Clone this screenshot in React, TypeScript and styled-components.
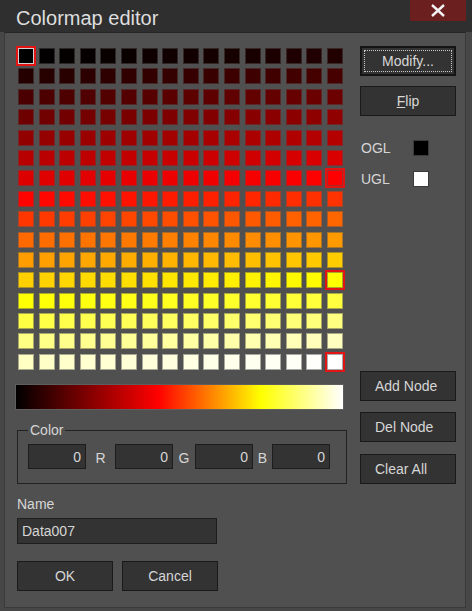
import React from "react";
import styled, { createGlobalStyle } from "styled-components";

const Global = createGlobalStyle`
  html, body { margin: 0; padding: 0; background: #474747; }
  * { box-sizing: border-box; }
`;

const BG = 0x50;

function hot(k: number): [number, number, number] {
  if (k <= 111) return [Math.round((255 * k) / 111), 0, 0];
  if (k <= 191) return [255, Math.round((255 * (k - 111)) / 80), 0];
  return [255, 255, Math.round((255 * (k - 191)) / 64)];
}

const rgb = (c: [number, number, number]) => `rgb(${c[0]},${c[1]},${c[2]})`;
const mix = (c: [number, number, number]): [number, number, number] => [
  Math.round((c[0] + BG) / 2),
  Math.round((c[1] + BG) / 2),
  Math.round((c[2] + BG) / 2),
];

const NODES = new Set([0, 111, 191, 255]);
const SELECTED = 0;

const Window = styled.div`
  width: 472px;
  height: 611px;
  background: #474747;
  display: flex;
  flex-direction: column;
  font-family: "Liberation Sans", Arial, sans-serif;
  font-size: 14px;
  color: #d6d6d6;
`;

const TitleBar = styled.div`
  height: 32px;
  flex: none;
  background: #2f2f2f;
  display: flex;
  justify-content: space-between;
  align-items: flex-start;
  padding-left: 16px;
`;

const Title = styled.div`
  padding-top: 7px;
  font-size: 20px;
  line-height: 1.15;
  color: #dedede;
`;

const CloseButton = styled.div`
  width: 56px;
  height: 21px;
  margin-right: 6px;
  background: #6b1f1f;
  display: flex;
  align-items: center;
  justify-content: center;
`;

const Body = styled.div`
  flex: 1;
  margin: 0 6px 3px 4px;
  background: #505050;
  border: 1px solid #3a3a3a;
  border-top-color: #262626;
  display: flex;
  padding: 0 0 0 10px;
`;

const LeftColumn = styled.div`
  width: 331px;
  display: flex;
  flex-direction: column;
  padding-top: 15px;
`;

const RightColumn = styled.div`
  width: 96px;
  margin-left: 14px;
  display: flex;
  flex-direction: column;
  padding-top: 13px;
`;

const Grid = styled.div`
  margin-left: 3px;
  width: 325px;
  height: 322px;
  display: grid;
  grid-template-columns: repeat(16, 16px);
  grid-template-rows: repeat(16, 16px);
  justify-content: space-between;
  align-content: space-between;
`;

const Cell = styled.div<{ $node: boolean; $selected: boolean }>`
  width: 16px;
  height: 16px;
  border: 1px solid;
  ${(p) => (p.$node ? "outline: 2px solid #e21414;" : "")}
  ${(p) => (p.$selected ? "border-color: #d0d0d0 !important;" : "")}
`;

const GradientBar = styled.div`
  margin-top: 14px;
  width: 329px;
  height: 26px;
  border: 1px solid #5e5e5e;
  background: linear-gradient(to right, #000 0%, #f00 43.5%, #ff0 74.9%, #fff 100%);
`;

const GroupBox = styled.fieldset`
  margin: 12px 0 0 2px;
  width: 330px;
  border: 1px solid #222;
  padding: 6px 0 14px 10px;
  min-width: 0;
`;

const Legend = styled.legend`
  padding: 0 2px;
  line-height: 16px;
  font-size: 14px;
  color: #d6d6d6;
`;

const FieldRow = styled.div`
  display: flex;
  align-items: center;
`;

const NumberBox = styled.div`
  width: 58px;
  height: 25px;
  background: #333;
  border: 1px solid #1d1d1d;
  display: flex;
  align-items: center;
  justify-content: flex-end;
  padding-right: 4px;
  color: #d6d6d6;
`;

const ChannelLabel = styled.div<{ $w: number }>`
  width: ${(p) => p.$w}px;
  text-align: center;
  padding-top: 3px;
`;

const NameLabel = styled.div`
  margin: 12px 0 0 2px;
  line-height: 16px;
`;

const NameInput = styled.div`
  margin: 6px 0 0 2px;
  width: 200px;
  height: 26px;
  background: #333;
  border: 1px solid #1d1d1d;
  padding-left: 4px;
  display: flex;
  align-items: center;
`;

const ButtonRow = styled.div`
  margin: 17px 0 0 2px;
  display: flex;
  gap: 9px;
`;

const Button = styled.div<{ $mt?: number; $align?: "left" | "center"; $default?: boolean }>`
  position: relative;
  width: 96px;
  height: 30px;
  margin-top: ${(p) => p.$mt ?? 0}px;
  background: #333;
  border: ${(p) => (p.$default ? "2px solid #141414" : "1px solid #1a1a1a")};
  display: flex;
  align-items: center;
  justify-content: ${(p) => (p.$align === "left" ? "flex-start" : "center")};
  padding-left: ${(p) => (p.$align === "left" ? "14px" : "0")};
  color: #d6d6d6;
`;

const FocusRing = styled.div`
  position: absolute;
  inset: 2px;
  border: 1px dotted #c8c8c8;
`;

const SwatchRow = styled.div<{ $mt: number }>`
  margin-top: ${(p) => p.$mt}px;
  height: 16px;
  display: flex;
  align-items: center;
  padding-left: 1px;
`;

const SwatchLabel = styled.div`
  width: 52px;
`;

const Swatch = styled.div<{ $color: string }>`
  width: 16px;
  height: 16px;
  background: ${(p) => p.$color};
  border: 1px solid #3a3a3a;
`;

export default function App() {
  const cells = Array.from({ length: 256 }, (_, k) => {
    const c = hot(k);
    return (
      <Cell
        key={k}
        $node={NODES.has(k)}
        $selected={k === SELECTED}
        style={{ background: rgb(c), borderColor: rgb(mix(c)) }}
      />
    );
  });

  return (
    <>
      <Global />
      <Window>
        <TitleBar>
          <Title>Colormap editor</Title>
          <CloseButton>
            <svg width="16" height="13" viewBox="0 0 16 13">
              <path d="M2 1 L14 12 M14 1 L2 12" stroke="#f2f2f2" strokeWidth="2.4" />
            </svg>
          </CloseButton>
        </TitleBar>
        <Body>
          <LeftColumn>
            <Grid>{cells}</Grid>
            <GradientBar />
            <GroupBox>
              <Legend>Color</Legend>
              <FieldRow>
                <NumberBox>0</NumberBox>
                <ChannelLabel $w={29}>R</ChannelLabel>
                <NumberBox>0</NumberBox>
                <ChannelLabel $w={22}>G</ChannelLabel>
                <NumberBox>0</NumberBox>
                <ChannelLabel $w={19}>B</ChannelLabel>
                <NumberBox>0</NumberBox>
              </FieldRow>
            </GroupBox>
            <NameLabel>Name</NameLabel>
            <NameInput>Data007</NameInput>
            <ButtonRow>
              <Button>OK</Button>
              <Button>Cancel</Button>
            </ButtonRow>
          </LeftColumn>
          <RightColumn>
            <Button $default>
              <FocusRing />
              Modify...
            </Button>
            <Button $mt={10}>
              <span>
                <u>F</u>lip
              </span>
            </Button>
            <SwatchRow $mt={24}>
              <SwatchLabel>OGL</SwatchLabel>
              <Swatch $color="#000" />
            </SwatchRow>
            <SwatchRow $mt={15}>
              <SwatchLabel>UGL</SwatchLabel>
              <Swatch $color="#fff" />
            </SwatchRow>
            <Button $mt={184} $align="left">Add Node</Button>
            <Button $mt={11} $align="left">Del Node</Button>
            <Button $mt={12} $align="left">Clear All</Button>
          </RightColumn>
        </Body>
      </Window>
    </>
  );
}
